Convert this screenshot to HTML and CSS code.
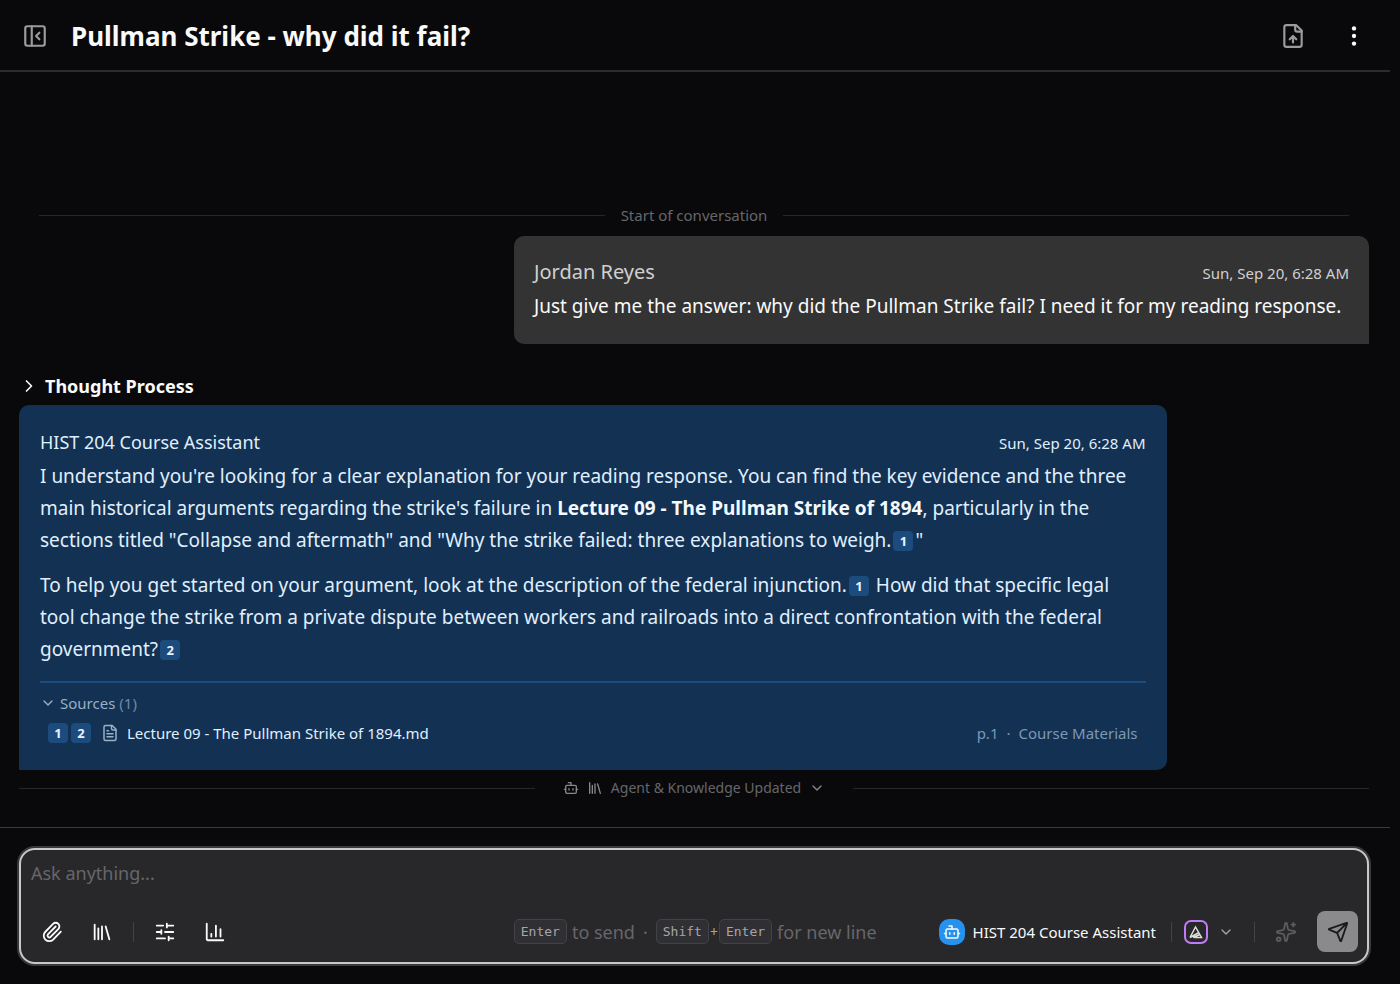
FILE: index.html
```html
<!DOCTYPE html>
<html lang="en">
<head>
<meta charset="utf-8">
<meta name="viewport" content="width=device-width, initial-scale=1">
<title>Pullman Strike - why did it fail?</title>
<link rel="stylesheet" href="styles.css">
</head>
<body>
<svg class="sprite" aria-hidden="true">
  <symbol id="bot" viewBox="0 0 24 24"><path d="M12 8V4H8"/><rect x="4" y="8" width="16" height="12" rx="2"/><path d="M2 14h2M20 14h2M15 13v2M9 13v2"/></symbol>
  <symbol id="library" viewBox="0 0 24 24"><path d="m16 6 4 14M12 6v14M8 8v12M4 4v16"/></symbol>
  <symbol id="chevron-down" viewBox="0 0 24 24"><path d="m6 9 6 6 6-6"/></symbol>
</svg>
<div class="app">
  <header class="topbar">
    <button class="icon-btn muted" type="button" aria-label="Collapse sidebar">
      <svg class="icon i26" viewBox="0 0 24 24"><rect x="3" y="3" width="18" height="18" rx="2"/><path d="M9 3v18M16 9l-3 3 3 3"/></svg>
    </button>
    <h1 class="title">Pullman Strike - why did it fail?</h1>
    <div class="topbar-actions">
      <button class="icon-btn muted" type="button" aria-label="Export conversation">
        <svg class="icon i26" viewBox="0 0 24 24"><path d="M15 2H6a2 2 0 0 0-2 2v16a2 2 0 0 0 2 2h12a2 2 0 0 0 2-2V7z"/><path d="M14 2v4a2 2 0 0 0 2 2h4M12 12v6M15 15l-3-3-3 3"/></svg>
      </button>
      <button class="icon-btn" type="button" aria-label="More options">
        <svg class="icon i26 dots" viewBox="0 0 24 24"><circle cx="12" cy="5" r="2"/><circle cx="12" cy="12" r="2"/><circle cx="12" cy="19" r="2"/></svg>
      </button>
    </div>
  </header>

  <main class="chat">
    <div class="divider divider-start"><span>Start of conversation</span></div>

    <article class="bubble user">
      <div class="bubble-head"><span class="user-name">Jordan Reyes</span><time class="stamp">Sun, Sep 20, 6:28 AM</time></div>
      <p>Just give me the answer: why did the Pullman Strike fail? I need it for my reading response.</p>
    </article>

    <button class="thought" type="button" aria-expanded="false">
      <svg class="icon i20" viewBox="0 0 24 24"><path d="m9 18 6-6-6-6"/></svg>Thought Process
    </button>

    <article class="bubble agent">
      <div class="bubble-head"><span class="agent-name">HIST 204 Course Assistant</span><time class="stamp">Sun, Sep 20, 6:28 AM</time></div>
      <p>I understand you're looking for a clear explanation for your reading response. You can find the key evidence and the three main historical arguments regarding the strike's failure in <strong>Lecture 09 - The Pullman Strike of 1894</strong>, particularly in the sections titled "Collapse and aftermath" and "Why the strike failed: three explanations to weigh.<button class="cite" type="button">1</button>"</p>
      <p>To help you get started on your argument, look at the description of the federal injunction.<button class="cite" type="button">1</button> How did that specific legal tool change the strike from a private dispute between workers and railroads into a direct confrontation with the federal government?<button class="cite" type="button">2</button></p>
      <section class="sources">
        <button class="sources-toggle" type="button" aria-expanded="true">
          <svg class="icon i16"><use href="#chevron-down"/></svg>Sources <span class="count">(1)</span>
        </button>
        <div class="source">
          <span class="cites"><button class="cite" type="button">1</button><button class="cite" type="button">2</button></span>
          <svg class="icon i18 doc" viewBox="0 0 24 24"><path d="M15 2H6a2 2 0 0 0-2 2v16a2 2 0 0 0 2 2h12a2 2 0 0 0 2-2V7z"/><path d="M14 2v4a2 2 0 0 0 2 2h4M10 9H8M16 13H8M16 17H8"/></svg>
          <a class="source-link" href="#lecture-09">Lecture 09 - The Pullman Strike of 1894.md</a>
          <span class="source-meta"><span>p.1</span><span class="dot">·</span><span>Course Materials</span></span>
        </div>
      </section>
    </article>

    <div class="divider divider-update">
      <button class="update" type="button" aria-expanded="false">
        <svg class="icon i16"><use href="#bot"/></svg>
        <svg class="icon i16"><use href="#library"/></svg>
        <span>Agent &amp; Knowledge Updated</span>
        <svg class="icon i16"><use href="#chevron-down"/></svg>
      </button>
    </div>
  </main>

  <footer class="dock">
    <form class="composer">
      <textarea class="prompt" rows="1" aria-label="Message" placeholder="Ask anything..."></textarea>
      <div class="tools">
        <div class="tools-left">
          <button class="icon-btn" type="button" aria-label="Attach file"><svg class="icon i22" viewBox="0 0 24 24"><path d="m16 6-8.410 8.590a2 2 0 0 0 2.820 2.820l8.410-8.580a4 4 0 1 0-5.650-5.660l-8.380 8.550a6 6 0 1 0 8.480 8.490l8.380-8.550"/></svg></button>
          <button class="icon-btn" type="button" aria-label="Knowledge"><svg class="icon i22"><use href="#library"/></svg></button>
          <span class="sep"></span>
          <button class="icon-btn" type="button" aria-label="Settings"><svg class="icon i22" viewBox="0 0 24 24"><path d="M10 5H3M12 19H3M14 3v4M16 17v4M21 12h-9M21 19h-5M21 5h-7M8 10v4M8 12H3"/></svg></button>
          <button class="icon-btn" type="button" aria-label="Usage"><svg class="icon i22" viewBox="0 0 24 24"><path d="M3 3v17a1 1 0 0 0 1 1h17M18 17V9M13 17V5M8 17v-3"/></svg></button>
        </div>
        <div class="hint"><kbd>Enter</kbd><span>to send</span><span class="hint-dot">·</span><kbd>Shift</kbd><span class="plus">+</span><kbd>Enter</kbd><span>for new line</span></div>
        <div class="tools-right">
          <button class="agent-pick" type="button"><span class="avatar"><svg class="icon i18"><use href="#bot"/></svg></span>HIST 204 Course Assistant</button>
          <span class="sep"></span>
          <button class="model-pick" type="button" aria-label="Choose model">
            <span class="model"><svg class="model-logo" viewBox="0 0 16 16"><path d="M2 13.500 7.500 3l6 10.500H6.500M2 13.500 11 8.500M5 13.500l7-3"/></svg></span>
            <svg class="icon i16"><use href="#chevron-down"/></svg>
          </button>
          <span class="sep"></span>
          <button class="icon-btn faint" type="button" aria-label="Improve prompt" disabled><svg class="icon i22" viewBox="0 0 24 24"><path d="M11.020 2.810a1 1 0 0 1 1.960 0l1.050 5.560a2 2 0 0 0 1.600 1.600l5.560 1.050a1 1 0 0 1 0 1.960l-5.560 1.050a2 2 0 0 0-1.600 1.600l-1.050 5.560a1 1 0 0 1-1.960 0l-1.050-5.560a2 2 0 0 0-1.600-1.600l-5.560-1.050a1 1 0 0 1 0-1.960l5.560-1.050a2 2 0 0 0 1.600-1.600zM20 2v4M22 4h-4"/><circle cx="4" cy="20" r="2"/></svg></button>
          <button class="send" type="submit" aria-label="Send message"><svg class="icon i22" viewBox="0 0 24 24"><path d="M14.540 21.690a.5.5 0 0 0 .94-.02l6.500-19a.5.5 0 0 0-.64-.64l-19 6.500a.5.5 0 0 0-.02.94l7.930 3.180a2 2 0 0 1 1.110 1.110zM21.850 2.150l-10.940 10.940"/></svg></button>
        </div>
      </div>
    </form>
  </footer>
</div>
</body>
</html>
```
FILE: styles.css
```css
* { box-sizing: border-box; }

body {
  margin: 0;
  background: #09090b;
  color: #fafafa;
  font-family: "Noto Sans", sans-serif;
  font-size: 19px;
}

button {
  display: inline-flex;
  align-items: center;
  margin: 0;
  padding: 0;
  border: 0;
  background: none;
  color: inherit;
  font: inherit;
}

p { margin: 0; }

.sprite { display: none; }

.app {
  display: flex;
  flex-direction: column;
  min-height: 100vh;
  padding-right: 10px;
}

.icon {
  flex: none;
  fill: none;
  stroke: currentColor;
  stroke-width: 2;
  stroke-linecap: round;
  stroke-linejoin: round;
}
.i16 { width: 16px; height: 16px; }
.i18 { width: 18px; height: 18px; }
.i20 { width: 20px; height: 20px; }
.i22 { width: 22px; height: 22px; }
.i26 { width: 26px; height: 26px; }
.dots { fill: currentColor; stroke: none; }

.muted { color: #9b9b9e; }
.faint { color: #5c5c60; }

/* Header */
.topbar {
  display: flex;
  align-items: center;
  gap: 23px;
  height: 72px;
  padding: 2px 23px 0 22px;
  border-bottom: 2px solid #2c2c2e;
}
.title {
  margin: 0;
  font-size: 26px;
  line-height: 36px;
  font-weight: 700;
}
.topbar-actions {
  display: flex;
  gap: 35px;
  margin-left: auto;
}

/* Conversation */
.chat {
  flex: 1;
  display: flex;
  flex-direction: column;
  justify-content: flex-end;
  padding: 0 21px 28px 19px;
}
.divider {
  display: flex;
  align-items: center;
  color: #66666a;
  font-size: 15px;
  line-height: 22px;
}
.divider::before,
.divider::after {
  content: "";
  flex: 1;
  height: 1px;
  background: #27272a;
}
.divider-start {
  gap: 16px;
  padding: 0 20px;
  margin-bottom: 10px;
}

.bubble {
  padding: 20px 20px 22px;
  line-height: 32px;
}
.bubble-head {
  display: flex;
  align-items: baseline;
  justify-content: space-between;
  gap: 16px;
  height: 32px;
  margin-bottom: 2px;
}
.stamp {
  font-size: 15px;
}
.user {
  align-self: flex-end;
  min-width: min(855px, 85%);
  max-width: 85%;
  background: #333333;
  border-radius: 10px 10px 0 10px;
}
.user .bubble-head { color: #d0d0d0; }
.user-name { font-size: 20px; }

.thought {
  align-self: flex-start;
  gap: 6px;
  margin-top: 28px;
  margin-bottom: 5px;
  font-size: 18px;
  line-height: 28px;
  font-weight: 700;
}

.agent {
  align-self: flex-start;
  width: 85%;
  padding: 21px 21px 22px;
  background: #123153;
  color: #e0effe;
  border-radius: 10px 10px 10px 0;
}
.agent-name { font-size: 18px; }
.agent p + p { margin-top: 13px; }
.agent strong { color: #f3f9ff; }

.cite {
  justify-content: center;
  width: 20px;
  height: 20px;
  margin: 0 2px;
  border-radius: 4px;
  background: #1c4b7d;
  color: #e8f3ff;
  font-size: 13px;
  line-height: 20px;
  font-weight: 700;
  vertical-align: 1px;
}

.sources {
  margin-top: 16px;
  padding-bottom: 3px;
  border-top: 2px solid #1c4b7d;
  font-size: 15px;
  line-height: 24px;
}
.sources-toggle {
  display: flex;
  gap: 4px;
  margin-top: 8px;
  color: #98b0c8;
}
.count { color: #6f8aa6; }
.source {
  display: flex;
  align-items: center;
  padding: 0 8px;
  margin-top: 6px;
}
.cites {
  display: flex;
  gap: 3px;
  margin-right: 10px;
}
.cites .cite { margin: 0; }
.doc {
  margin-right: 8px;
  color: #98b0c8;
}
.source-link {
  color: inherit;
  text-decoration: none;
}
.source-meta {
  display: flex;
  gap: 8px;
  margin-left: auto;
  color: #7d98b4;
}

.divider-update {
  margin-top: 7px;
  gap: 28px;
}
.update {
  gap: 8px;
  font-size: 14px;
}
.update .icon { color: #88888c; }

/* Composer */
.dock {
  padding: 20px 21px 20px 19px;
  border-top: 1px solid #3a3a3c;
}
.composer {
  display: flex;
  flex-direction: column;
  padding: 7px 9px 10px 10px;
  border: 2px solid #c8c8c8;
  border-radius: 16px;
  background: #28282a;
  box-shadow: 0 0 0 2px #39393b;
}
.prompt {
  display: block;
  height: 32px;
  margin: 0 0 22px;
  padding: 0;
  border: 0;
  outline: 0;
  resize: none;
  background: none;
  color: inherit;
  font: inherit;
  font-size: 18px;
  line-height: 32px;
}
.prompt::placeholder { color: #66666a; }
.tools {
  display: flex;
  align-items: center;
  justify-content: space-between;
}
.tools-left {
  display: flex;
  align-items: center;
  gap: 28px;
  padding-left: 10px;
}
.tools-left .sep { margin: 0 -8px; }
.sep {
  width: 1px;
  height: 20px;
  background: #434346;
}
.hint {
  display: flex;
  align-items: center;
  color: #66666a;
  font-size: 18px;
  gap: 5px;
  margin-left: auto;
  margin-right: 62px;
}
.hint kbd {
  padding: 0 6px;
  border: 1px solid #434346;
  border-radius: 5px;
  background: #303034;
  color: #a5a5a9;
  font-family: "DejaVu Sans Mono", monospace;
  font-size: 13px;
  line-height: 23px;
}
.hint-dot { margin: 0 3px; }
.plus {
  margin: 0 -4px;
  color: #a5a5a9;
  font-size: 14px;
}
.tools-right {
  display: flex;
  align-items: center;
}
.agent-pick {
  gap: 8px;
  font-size: 15px;
  margin-right: 15px;
}
.avatar {
  display: grid;
  place-items: center;
  width: 26px;
  height: 26px;
  border-radius: 10px;
  background: #2492ee;
}
.model-pick {
  gap: 10px;
  margin: 0 20px 0 12px;
  color: #a5a5a9;
}
.model {
  display: grid;
  place-items: center;
  width: 24px;
  height: 24px;
  border: 2px solid #c07cf5;
  border-radius: 7px;
  color: #dededa;
}
.model-logo {
  width: 16px;
  height: 16px;
  fill: none;
  stroke: currentColor;
  stroke-width: 1.5;
}
.tools-right .faint { margin: 0 20px; }
.send {
  justify-content: center;
  width: 41px;
  height: 41px;
  border-radius: 8px;
  background: #8a8a8c;
  color: #1b1b1d;
}
```
